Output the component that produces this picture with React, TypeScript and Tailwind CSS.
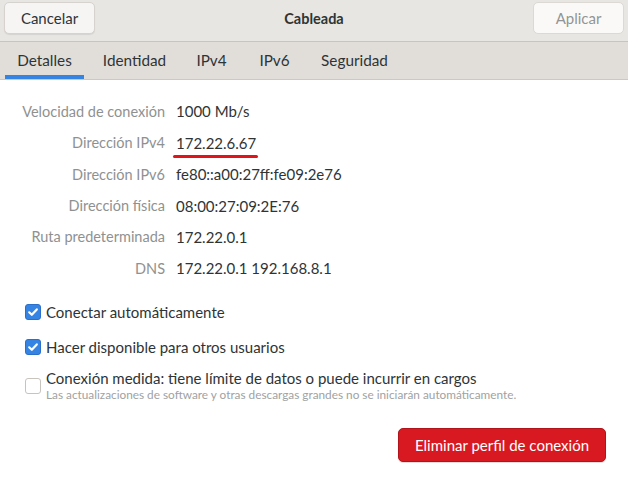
import React from "react";

const rows: [string, string][] = [
  ["Velocidad de conexión", "1000 Mb/s"],
  ["Dirección IPv4", "172.22.6.67"],
  ["Dirección IPv6", "fe80::a00:27ff:fe09:2e76"],
  ["Dirección física", "08:00:27:09:2E:76"],
  ["Ruta predeterminada", "172.22.0.1"],
  ["DNS", "172.22.0.1 192.168.8.1"],
];

const tabs: { t: string; w: string }[] = [
  { t: "Detalles", w: "w-[79px]" },
  { t: "Identidad", w: "w-[101px]" },
  { t: "IPv4", w: "w-[53px]" },
  { t: "IPv6", w: "w-[73px]" },
  { t: "Seguridad", w: "w-[87px]" },
];

function Check({ checked }: { checked: boolean }) {
  return checked ? (
    <div className="w-[16px] h-[16px] rounded-[3px] bg-[#3584e4] border border-[#2a6fc9] flex items-center justify-center shrink-0">
      <svg width="12" height="12" viewBox="0 0 12 12">
        <path d="M2.2 6.3 L4.8 8.8 L9.8 3.4" fill="none" stroke="white" strokeWidth="2.2" strokeLinecap="round" strokeLinejoin="round" />
      </svg>
    </div>
  ) : (
    <div className="w-[16px] h-[16px] rounded-[3px] bg-white border border-[#c8c3bd] shrink-0" />
  );
}

export default function App() {
  return (
    <div
      className="w-[628px] h-[486px] bg-white text-[#2e3436] flex flex-col overflow-hidden"
      style={{ fontFamily: "Lato, 'Noto Sans', sans-serif" }}
    >
      {/* Header */}
      <div className="h-[42px] bg-[#e8e6e3] border-b border-[#c8c4bf] flex items-start justify-between px-[4px] pt-[2px] relative">
        <button className="h-[32px] w-[91px] rounded-[5px] bg-[#f6f5f4] border border-[#d6d2cd] shadow-[0_1px_1px_rgba(0,0,0,0.08)] text-[15px] text-[#2e3436]">
          Cancelar
        </button>
        <div className="absolute left-0 right-0 top-[8px] text-center text-[14.5px] font-bold text-[#2e3436] pointer-events-none">
          Cableada
        </div>
        <button className="h-[32px] w-[91px] rounded-[5px] bg-[#faf9f8] border border-[#dcd8d3] text-[15px] text-[#929595]">
          Aplicar
        </button>
      </div>
      {/* Tabs */}
      <div className="h-[38px] bg-[#e1deda] border-b border-[#cdc8c2] flex items-stretch px-[5px]">
        {tabs.map(({ t, w }, i) => (
          <div
            key={t}
            className={
              "flex items-center justify-center text-[15.3px] text-[#2e3436] border-b-[4px] pt-[4px] " +
              w +
              (i === 0 ? " border-[#3584e4]" : " border-transparent")
            }
          >
            {t}
          </div>
        ))}
      </div>
      {/* Details */}
      <div className="flex flex-col pt-[16px]">
        {rows.map(([k, v], i) => (
          <div key={k} className="flex items-center h-[31.4px]">
            <div className="w-[176px] text-right text-[#8f9191] pr-[11px] text-[14.5px]">{k}</div>
            <div className="relative text-[#2e3436] text-[15px]">
              {v}
              {i === 1 && (
                <div className="absolute left-[-3px] right-[-2px] bottom-[-4px] h-[3px] rounded-full bg-[#e0151b]" />
              )}
            </div>
          </div>
        ))}
      </div>
      {/* Checkboxes */}
      <div className="flex flex-col pl-[25px] pt-[19px] gap-[17px]">
        <div className="flex items-center gap-[5px] text-[15px] h-[18px]">
          <Check checked />
          <span>Conectar automáticamente</span>
        </div>
        <div className="flex items-center gap-[5px] text-[15px] h-[18px]">
          <Check checked />
          <span>Hacer disponible para otros usuarios</span>
        </div>
        <div className="flex items-center gap-[5px] mt-[-4px]">
          <Check checked={false} />
          <div className="flex flex-col leading-tight">
            <span className="text-[15px]">Conexión medida: tiene límite de datos o puede incurrir en cargos</span>
            <span className="text-[11.8px] text-[#a0a2a2]">
              Las actualizaciones de software y otras descargas grandes no se iniciarán automáticamente.
            </span>
          </div>
        </div>
      </div>
      <div className="flex justify-end pr-[22px] pt-[25px]">
        <button className="h-[34px] w-[208px] rounded-[5px] bg-[#d81921] border border-[#b0141a] shadow-[0_1px_1px_rgba(0,0,0,0.15)] text-white text-[15px]">
          Eliminar perfil de conexión
        </button>
      </div>
    </div>
  );
}
